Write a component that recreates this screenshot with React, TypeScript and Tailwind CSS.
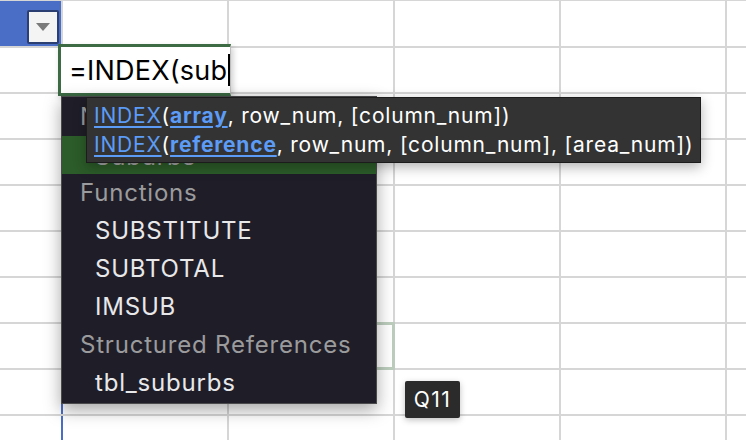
import React from "react";

const NCOLS = 6;
const NROWS = 10;

function Cell({ r, c }: { r: number; c: number }) {
  if (r === 0 && c === 0) {
    return (
      <div className="bg-[#4a6dc5] flex items-start justify-end pt-[9px] pr-[2px]">
        <div className="w-[32px] h-[34px] bg-[#f4f4f4] border-2 border-[#2b3f72] rounded-[2px] flex items-center justify-center">
          <svg width="14" height="8" viewBox="0 0 14 8">
            <path d="M0 0 L14 0 L7 8 Z" fill="#7a7a7a" />
          </svg>
        </div>
      </div>
    );
  }
  if (c === 0) return <div className="bg-white shadow-[2px_0_0_#4a6dc5]" />;
  if (r === 7 && c === 2) return <div className="bg-white outline-3 outline-[#bccdbd] outline-offset-[-1px]" />;
  return <div className="bg-white" />;
}

function Grid() {
  const cells: React.ReactNode[] = [];
  for (let r = 0; r < NROWS; r++) {
    for (let c = 0; c < NCOLS; c++) {
      cells.push(<Cell key={`${r}-${c}`} r={r} c={c} />);
    }
  }
  return (
    <div className="grid grid-cols-[61px_164px_164px_164px_164px_1fr] grid-rows-[45px_repeat(9,44px)] gap-[2px] bg-[#d6d6d6] pt-[1px]">
      {cells}
    </div>
  );
}

const Link = ({ children, bold }: { children: React.ReactNode; bold?: boolean }) => (
  <span className={`text-[#5c9cf6] underline decoration-[2px] underline-offset-[3px] ${bold ? "font-bold" : ""}`}>{children}</span>
);

export default function App() {
  const header = "h-[38px] flex items-center pl-[18px] text-[#9b9b9d] text-[24px] tracking-[0.8px]";
  const item = "h-[38px] flex items-center pl-[33px] text-[#e8e8ea] text-[24px] tracking-[0.8px]";
  return (
    <div className="relative w-[746px] h-[440px] overflow-hidden bg-white font-['Inter','Noto_Sans',sans-serif]">
      <Grid />

      {/* formula editor */}
      <div className="absolute left-[58px] top-[44px] w-[173px] h-[52px] bg-white border-[3px] border-[#3c6b44] border-r-[1px] border-r-[#bdbdbd] shadow-[2px_3px_6px_rgba(0,0,0,0.2)] flex items-center pl-[8px]">
        <span className="text-[27px] text-black leading-none tracking-[0.2px] whitespace-nowrap">=INDEX(sub</span>
        <span className="w-[2px] h-[32px] bg-black ml-[1px] shrink-0" />
      </div>

      {/* dropdown */}
      <div className="absolute left-[61px] top-[96px] w-[316px] h-[308px] bg-[#1f1e28] border border-[#4a4a4c] shadow-[0_6px_16px_rgba(0,0,0,0.35)] pt-[1px]">
        <div className={header}>Names</div>
        <div className="h-[38px] flex items-center pt-[4px] pl-[33px] text-[#a8a8a8] text-[24px] tracking-[0.8px] bg-[#2c5c29]">Suburbs</div>
        <div className={header}>Functions</div>
        <div className={item}>SUBSTITUTE</div>
        <div className={item}>SUBTOTAL</div>
        <div className={item}>IMSUB</div>
        <div className={header}>Structured References</div>
        <div className={item}>tbl_suburbs</div>
      </div>

      {/* tooltip */}
      <div className="absolute left-[86px] top-[97px] w-[615px] h-[66px] bg-[#333333] border border-[#1c1c1c] shadow-[0_4px_12px_rgba(0,0,0,0.3)] pl-[7px] pt-[3px] text-[21px] leading-[29px] tracking-[0.8px] text-white">
        <div className="whitespace-nowrap">
          <Link>INDEX</Link>(<Link bold>array</Link>, row_num, [column_num])
        </div>
        <div className="whitespace-nowrap">
          <Link>INDEX</Link>(<Link bold>reference</Link>, row_num, [column_num], [area_num])
        </div>
      </div>

      {/* Q11 */}
      <div className="absolute left-[405px] top-[381px] w-[55px] h-[37px] bg-[#2b2b2b] rounded-[2px] flex items-center justify-center text-white text-[21px] tracking-[1.5px] shadow-[0_2px_6px_rgba(0,0,0,0.25)]">
        Q11
      </div>
    </div>
  );
}
